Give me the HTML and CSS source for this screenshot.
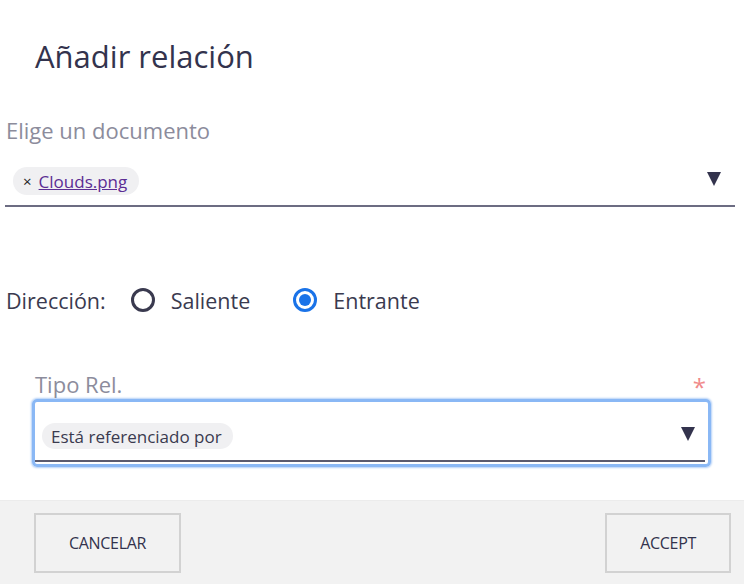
FILE: index.html
```html
<!DOCTYPE html>
<html lang="es">
<head>
<meta charset="utf-8">
<title>Añadir relación</title>
<link rel="stylesheet" href="styles.css">
</head>
<body>
<div class="dialog">
  <div class="content">
    <h2 class="title">Añadir relación</h2>

    <div class="doc-field">
      <div class="label">Elige un documento</div>
      <div class="control">
        <span class="chip"><span class="chip-x">×</span><a class="chip-link" href="#">Clouds.png</a></span>
        <span class="arrow">
          <svg width="16" height="15" viewBox="0 0 16 15"><polygon points="1,1 15,1 8,15" fill="#33334d"/></svg>
        </span>
      </div>
    </div>

    <div class="direction">
      <span class="dir-label">Dirección:</span>
      <label class="radio">
        <span class="radio-circle"></span>
        <span class="radio-text">Saliente</span>
      </label>
      <label class="radio">
        <span class="radio-circle checked"><span class="radio-dot"></span></span>
        <span class="radio-text">Entrante</span>
      </label>
    </div>

    <div class="type-field">
      <div class="type-head">
        <span class="label">Tipo Rel.</span>
        <span class="required">*</span>
      </div>
      <div class="type-box">
        <div class="type-inner">
          <span class="chip chip-plain">Está referenciado por</span>
          <span class="arrow">
            <svg width="16" height="15" viewBox="0 0 16 15"><polygon points="1,1 15,1 8,15" fill="#33334d"/></svg>
          </span>
        </div>
      </div>
    </div>
  </div>

  <div class="footer">
    <button class="btn">CANCELAR</button>
    <button class="btn">ACCEPT</button>
  </div>
</div>
</body>
</html>
```

FILE: styles.css
```css
html, body {
  margin: 0;
  padding: 0;
  background: #ffffff;
}

body {
  font-family: "Open Sans", "Noto Sans", sans-serif;
  color: #3a3a4f;
  width: 744px;
  height: 584px;
  overflow: hidden;
}

.dialog {
  display: flex;
  flex-direction: column;
  height: 584px;
}

.content {
  height: 500px;
  display: flex;
  flex-direction: column;
}

.title {
  margin: 0;
  padding: 36px 0 0 35px;
  font-size: 31px;
  font-weight: 400;
  line-height: 40px;
  color: #33334d;
}

.label {
  font-size: 22px;
  line-height: 30px;
  color: #8c8c9c;
}

.doc-field {
  margin: 39px 9px 0 5px;
}

.doc-field .label {
  padding-left: 1px;
}

.control {
  display: flex;
  align-items: center;
  justify-content: space-between;
  margin-top: 22px;
  padding: 0 13px 10px 8px;
  border-bottom: 2px solid #6c6c82;
}

.chip {
  display: inline-flex;
  align-items: center;
  height: 28px;
  padding: 0 12px 0 10px;
  border-radius: 14px;
  background: #f0f0f2;
  font-size: 17px;
  color: #3a3a4f;
}

.chip-x {
  font-size: 15px;
  color: #222;
  margin-right: 7px;
}

.chip-link {
  color: #5b2d94;
  text-decoration: underline;
}

.arrow {
  display: inline-flex;
  margin-top: -5px;
}

.direction {
  display: flex;
  align-items: center;
  margin: 78px 0 0 6px;
  height: 30px;
  font-size: 21.5px;
}

.dir-label {
  margin-right: 25px;
}

.radio {
  display: inline-flex;
  align-items: center;
  margin-right: 43px;
}

.radio-circle {
  box-sizing: border-box;
  width: 24px;
  height: 24px;
  border: 3px solid #3a3a4f;
  border-radius: 50%;
  margin-right: 16px;
  display: inline-flex;
  align-items: center;
  justify-content: center;
}

.radio-circle.checked {
  border-color: #1a73e8;
}

.radio-dot {
  width: 12px;
  height: 12px;
  border-radius: 50%;
  background: #1a73e8;
}

.type-field {
  margin: 54px 33px 0 32px;
}

.type-head {
  display: flex;
  justify-content: space-between;
  padding: 0 0 0 3px;
  height: 30px;
}

.required {
  color: #f08a8a;
  font-size: 24px;
  line-height: 30px;
  margin-right: 5px;
  margin-top: 3px;
}

.type-box {
  height: 68px;
  box-sizing: border-box;
  border: 3px solid #8ab8f5;
  border-radius: 5px;
  box-shadow: 0 0 2px 1px #b3d0f7;
  padding: 0 3px 2px 0;
}

.type-inner {
  height: 100%;
  box-sizing: border-box;
  border-bottom: 2px solid #5a5a6e;
  display: flex;
  align-items: center;
  justify-content: space-between;
  padding: 10px 9px 0 7px;
}

.chip-plain {
  padding: 0 11px 0 9px;
  height: 26px;
  font-size: 17px;
}

.footer {
  flex: 1;
  display: flex;
  justify-content: space-between;
  align-items: flex-start;
  background: #f2f2f2;
  border-top: 1px solid #ececec;
  padding: 12px 13px 0 34px;
}

.btn {
  height: 60px;
  padding: 0 33px;
  background: #f2f2f2;
  border: 2px solid #d2d2d2;
  font-family: "Open Sans", "Noto Sans", sans-serif;
  font-size: 16px;
  color: #33334d;
  letter-spacing: -0.3px;
}
```
